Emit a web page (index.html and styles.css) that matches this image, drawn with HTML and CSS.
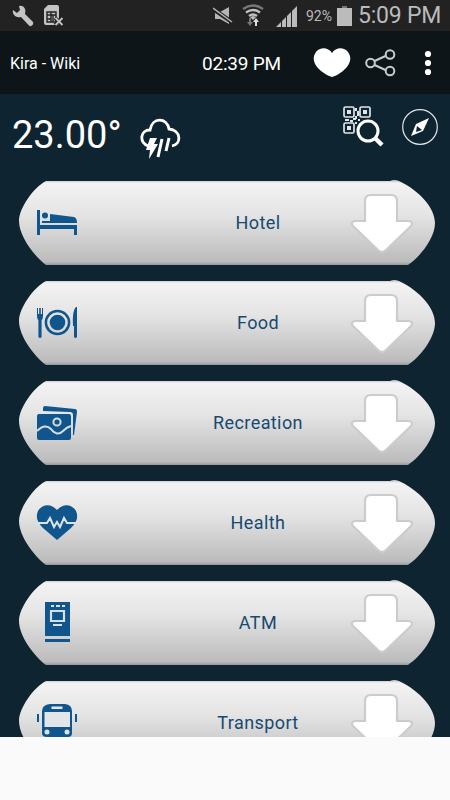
FILE: index.html
```
<!DOCTYPE html>
<html lang="en">

<head>
    <meta charset="utf-8">
    <meta name="viewport" content="width=device-width, initial-scale=1">
    <title>Kira - Wiki</title>
    <link rel="stylesheet" href="styles.css">
</head>

<body>
    <!-- shared shapes -->
    <svg class="defs" width="0" height="0">
        <symbol id="arrow" viewBox="0 0 66 62">
            <path d="M22 3h20q6 0 6 6v20h12q5 1 2 5L37 58q-4 4-8 0L4 34q-3-4 2-5h10V9q0-6 6-6z" fill="#fff" stroke="#ccc" stroke-width="2.200" />
        </symbol>
    </svg>

    <div class="status-bar">
        <svg class="wrench" width="22" height="22" viewBox="0 0 22 22">
            <path d="M7 1Q11 0 13 4q1 2 0 5l8 8q1 2-1 3.500-2 1.500-3 0L9 12q-3 1-6-1Q0 8 1 5l4 3 3-3z" fill="#c4c4c4" />
        </svg>
        <svg class="sim" width="20" height="22" viewBox="0 0 20 22">
            <path d="M0 4l4-4h9q2 0 2 2v17q0 1-2 1H2q-2 0-2-2z" fill="#c4c4c4" />
            <path d="M3 7h9v10H3zM3 10h4M3 14h4M7 7v10M7 10h5M9 10v7" fill="none" stroke="#222" stroke-width="1.400" />
            <path d="M11 13l8 7M19 13l-8 7" stroke="#222" stroke-width="4" />
            <path d="M11.500 13l7 7M18.500 13l-7 7" stroke="#c4c4c4" stroke-width="1.800" />
        </svg>
        <svg class="mute" width="20" height="18" viewBox="0 0 20 18">
            <path d="M2 5h5l9-5v17l-9-5H2z" fill="#b5b5b5" />
            <path d="M0 2l19 13" stroke="#222" stroke-width="4" />
            <path d="M0 1l19 14" stroke="#b5b5b5" stroke-width="1.500" />
        </svg>
        <svg class="wifi" width="22" height="23" viewBox="0 0 22 23">
            <g fill="none" stroke-width="2.300">
                <path d="M1 5Q11-2 21 5" stroke="#777" />
                <path d="M4 8.500q7-5 14 0M7 12q4-3 8 0" stroke="#c0c0c0" />
            </g>
            <path d="M8 13l3-1 3 1-3 3z" fill="#c0c0c0" />
            <path d="M7 14h2v4h2l-3 4-3-4h2z" fill="#777" />
            <path d="M13 22h2v-4h2l-3-4-3 4h2z" fill="#ddd" />
        </svg>
        <svg class="signal" width="22" height="22" viewBox="0 0 22 22">
            <path d="M0 21L21 0v21z" fill="#bbb" />
            <path d="M5.500 14v8M10.500 9v13M15.500 4v18" stroke="#222" stroke-width="1" />
        </svg>
        <span class="percent">92%</span>
        <svg class="battery" width="15" height="20" viewBox="0 0 15 20">
            <path d="M5 0h5v2H5z" fill="#777" />
            <path d="M0 2h15v18H0z" fill="#bbb" />
        </svg>
        <span class="clock">5:09 PM</span>
    </div>

    <div class="header">
        <span class="title">Kira - Wiki</span>
        <span class="time">02:39 PM</span>
        <svg class="heart" width="38" height="30" viewBox="0 0 38 30">
            <path d="M19 5C23-1 31-1 35 4c5 7 1 14-5 19-4 3-7 5-11 6-4-1-7-3-11-6C2 18-2 11 3 4 7-1 15-1 19 5z" fill="#fff" />
        </svg>
        <svg class="share" width="32" height="28" viewBox="0 0 32 28">
            <g fill="none" stroke="#c5cdd0" stroke-width="2">
                <path d="M9.500 12l11-5M9.500 16l11 5" />
                <circle cx="5.500" cy="14" r="4.300" />
                <circle cx="25" cy="5.500" r="4.300" />
                <circle cx="25" cy="22" r="4.300" />
            </g>
        </svg>
        <svg class="dots" width="8" height="26" viewBox="0 0 8 26">
            <circle cx="4" cy="4" r="3.100" fill="#fff" />
            <circle cx="4" cy="13" r="3.100" fill="#fff" />
            <circle cx="4" cy="22" r="3.100" fill="#fff" />
        </svg>
    </div>

    <div class="main">
        <div class="weather">
            <span class="temperature">23.00°</span>
            <svg class="cloud" width="42" height="42" viewBox="0 0 42 42">
                <path d="M8 28C-1 24 0 12 10 12 12-1 27-1 29 11c12 1 13 15 3 17" fill="none" stroke="#fff" stroke-width="2.800" />
                <path d="M10 20h7l-3 6h4L9 41l1-9H6z" fill="#fff" />
                <path d="M22 21l-4 18M29 20l-3 13" stroke="#fff" stroke-width="3" />
            </svg>
            <svg class="qr" width="42" height="42" viewBox="0 0 42 42">
                <g fill="none" stroke="#dfe5e8" stroke-width="1.700">
                    <rect x="1" y="1" width="10" height="10" rx="1.500" />
                    <rect x="17" y="1" width="10" height="10" rx="1.500" />
                    <rect x="1" y="17" width="10" height="10" rx="1.500" />
                </g>
                <g fill="#dfe5e8">
                    <path d="M4 4h4v4H4zM20 4h4v4h-4zM4 20h4v4H4z" />
                    <path d="M12 2h2v3h-2zM14 5h2v5h-2zM12 10h2v3h-2zM2 13h4v2H2zM7 14h3v2H7zM10 12h3v2h-3zM15 13h2v2h-2zM12 16h2v2h-2z" />
                </g>
                <circle cx="25" cy="25" r="10" fill="#0f2431" stroke="#fff" stroke-width="3" />
                <path d="M32 32l7 7" stroke="#fff" stroke-width="4.500" />
            </svg>
            <svg class="compass" width="38" height="38" viewBox="0 0 38 38">
                <circle cx="19" cy="19" r="17.300" fill="none" stroke="#dfe5e8" stroke-width="1.200" />
                <path d="M28 10L22 23 10 28l5-12z" fill="#fff" />
                <path d="M16 18l5 4-6 2z" fill="#0f2431" />
            </svg>
        </div>

        <div class="menu">
            <div class="item">
                <svg class="icon" width="42" height="42" viewBox="0 0 42 42">
                    <path d="M1 8h3v15h37v10h-3v-6H4v6H1zM14 12l24 3q3 1 3 6H6v-2h8z" fill="#10568d" />
                    <circle cx="9" cy="13.500" r="3" fill="#10568d" />
                </svg>
                <span class="label">Hotel</span>
                <svg class="arrow" width="66" height="62"><use href="#arrow" /></svg>
            </div>
            <div class="item">
                <svg class="icon" width="42" height="42" viewBox="0 0 42 42">
                    <path d="M1 6h1v6h1.200V6h1.600v6H6V6h1v8q0 3-1.400 4v17q-1.600 2-3.200 0V18Q1 17 1 14zM38 35V24h-1q-1-16 3-19h1v30q-1.500 2-3 0z" fill="#10568d" />
                    <circle cx="21.500" cy="20.500" r="11.600" fill="none" stroke="#10568d" stroke-width="2.500" />
                    <circle cx="21.500" cy="20.500" r="7.800" fill="#10568d" />
                </svg>
                <span class="label">Food</span>
                <svg class="arrow" width="66" height="62"><use href="#arrow" /></svg>
            </div>
            <div class="item">
                <svg class="icon" width="42" height="42" viewBox="0 0 42 42">
                    <path d="M9 4l30 3q2 0 2 3l-3 23h-1V13q0-3-3-3L7 9V6q0-2 2-2z" fill="#10568d" />
                    <rect x="1" y="12" width="34" height="26" rx="2" fill="#10568d" />
                    <path d="M1 29q8-8 14-2 6 8 12 2 4-4 8-5" fill="none" stroke="#d4dde3" stroke-width="2" />
                    <circle cx="21" cy="20" r="3.600" fill="none" stroke="#d4dde3" stroke-width="2" />
                </svg>
                <span class="label">Recreation</span>
                <svg class="arrow" width="66" height="62"><use href="#arrow" /></svg>
            </div>
            <div class="item">
                <svg class="icon" width="42" height="42" viewBox="0 0 42 42">
                    <path d="M21 8C27 1 36 2 40 9c3 7 0 12-5 17L21 38 7 26C2 21-1 16 2 9 6 2 15 1 21 8z" fill="#10568d" />
                    <path d="M2 21h9l3-5 4 9 3-5 3 5 4-9 3 5h9" fill="none" stroke="#dce3e7" stroke-width="2" />
                </svg>
                <span class="label">Health</span>
                <svg class="arrow" width="66" height="62"><use href="#arrow" /></svg>
            </div>
            <div class="item">
                <svg class="icon" width="42" height="42" viewBox="0 0 42 42">
                    <path d="M9 0h25v34H9zM9 37h25v3H9z" fill="#10568d" />
                    <path d="M15 9h13v10H15z" fill="none" stroke="#d8e0e4" stroke-width="2.200" />
                    <path d="M15 4h3M20 4h4M26 4h3M17 23h9" stroke="#d8e0e4" stroke-width="2" />
                </svg>
                <span class="label">ATM</span>
                <svg class="arrow" width="66" height="62"><use href="#arrow" /></svg>
            </div>
            <div class="item">
                <svg class="icon" width="42" height="42" viewBox="0 0 42 42">
                    <path d="M14 2h15q7 1 7 7v22q0 4-4 4v3h-5v-3H16v3h-5v-3q-5 0-5-4V9q0-6 8-7z" fill="#10568d" />
                    <path d="M1 12h2v8H1zM39 12h2v8h-2z" fill="#10568d" />
                    <path d="M15.500 4.500h11V7h-11zM8.500 10H34v15H8.500z" fill="#e3e6e8" />
                    <circle cx="11" cy="30" r="2.500" fill="#dde2e5" />
                    <circle cx="31" cy="30" r="2.500" fill="#dde2e5" />
                </svg>
                <span class="label">Transport</span>
                <svg class="arrow" width="66" height="62"><use href="#arrow" /></svg>
            </div>
        </div>
    </div>
</body>

</html>
```
FILE: styles.css
```
body {
    font-family: Roboto, sans-serif;
    margin: 0;
    background-color: #fafafa;
    height: 800px;
    overflow: hidden;
}

.defs {
    display: block;
}

svg {
    flex-shrink: 0;
}

.status-bar {
    display: flex;
    align-items: center;
    height: 31px;
    padding-left: 12px;
    background-color: #222;
    color: #bbb;
    white-space: nowrap;
}

.sim {
    margin-left: 10px;
}

.mute {
    margin-left: 149px;
}

.wifi {
    margin-left: 9px;
}

.signal {
    margin-left: 12px;
    margin-top: 2px;
}

.percent {
    width: 31px;
    margin-left: 8px;
    font-size: 14px;
}

.battery {
    margin-right: 6px;
}

.clock {
    font-size: 23px;
    letter-spacing: -0.2px;
}

.header {
    display: flex;
    align-items: center;
    height: 63px;
    padding-left: 10px;
    background-color: #0d1518;
    color: #fff;
    white-space: nowrap;
}

.title {
    width: 192px;
    padding-top: 2px;
    font-size: 16px;
}

.time {
    width: 111px;
    padding-top: 2px;
    font-size: 19px;
    letter-spacing: -0.2px;
}

.share {
    margin-left: 14px;
}

.dots {
    margin-left: 27px;
}

.main {
    height: 643px;
    background-color: #0f2431;
    overflow: hidden;
}

.weather {
    display: flex;
    align-items: center;
    height: 86px;
    padding-left: 12px;
    box-sizing: border-box;
    color: #fff;
}

.temperature {
    width: 128px;
    font-size: 38px;
    margin-top: -4px;
}

.cloud {
    margin-top: 4px;
}

.qr {
    margin-left: 161px;
    margin-top: -21px;
}

.compass {
    margin-left: 16px;
    margin-top: -21px;
}

.menu {
    display: flex;
    flex-direction: column;
    gap: 14px;
    padding-left: 19px;
}

.item {
    display: flex;
    align-items: center;
    width: 416px;
    height: 86px;
    padding-left: 17px;
    box-sizing: border-box;
    background: linear-gradient(#bbb 0, #f3f3f3 3px, #e4e4e4 35px, #bbb 82px, #858a8d 86px);
    clip-path: path("M27 1H371Q375 -1 380 1C401 11 416 28 416 43C416 58 401 77 389 85H27C15 76 0 56 0 41C0 28 15 7 27 1Z");
}

.label {
    width: 270px;
    margin-right: 1px;
    padding-left: 90px;
    padding-bottom: 1px;
    box-sizing: border-box;
    text-align: center;
    font-size: 18px;
    letter-spacing: 0.4px;
    color: #174a70;
}
```
